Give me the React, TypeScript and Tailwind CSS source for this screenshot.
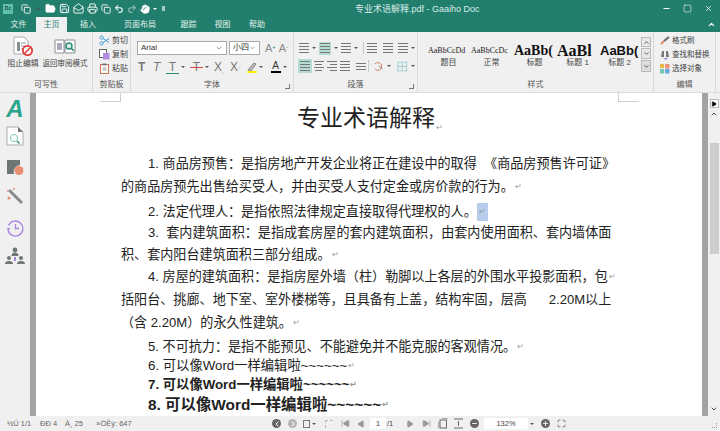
import {
  Copy, FolderOpen, Save, MailOpen, Printer, Undo2, Redo2, Hand, ChevronDown, ChevronUp, Minus, Square, X,
  ChevronLeft, ChevronRight, Plus, Maximize, Play, SkipBack, SkipForward,
} from 'lucide-react';

const font = { cjk: "font-['Liberation_Sans','Noto_Sans_CJK_SC',sans-serif]" };

const tabs = ['文件', '主页', '插入', '页面布局', '跟踪', '视图', '帮助'];

function Caret() {
  return <span className="mx-[2px] h-0 w-0 border-x-[2px] border-t-[2px] border-x-transparent border-t-[#555]" />;
}

function Group({ w, label, corner, children }: { w: string; label: string; corner?: boolean; children: React.ReactNode }) {
  return (
    <div className={`${w} relative flex shrink-0 flex-col border-r border-[#d9d9d9]`}>
      <div className="relative h-[46px]">{children}</div>
      <div className="text-center text-[8px] leading-[14px] text-[#555]">{label}</div>
      {corner && <span className="absolute bottom-[3px] right-[3px] h-[5px] w-[5px] border-b border-r border-[#777]" />}
    </div>
  );
}

function Lines({ n = 4, align = 'stretch' }: { n?: number; align?: 'stretch' | 'center' | 'right' }) {
  return (
    <span className={`flex h-[12px] w-[11px] flex-col justify-center gap-[2px] ${align === 'center' ? 'items-center' : align === 'right' ? 'items-end' : 'items-stretch'}`}>
      {Array.from({ length: n }).map((_, i) => (
        <span key={i} className={`block h-px bg-[#777] ${i % 2 && align !== 'stretch' ? 'w-[7px]' : 'w-[10px]'}`} />
      ))}
    </span>
  );
}

function StyleCard({ w, sample, cls, label }: { w: string; sample: string; cls: string; label: string }) {
  return (
    <div className={`${w} flex shrink-0 flex-col items-center pt-[8px]`}>
      <div className={`flex h-[13px] w-full items-center whitespace-nowrap pl-[1px] ${cls}`}>{sample}</div>
      <div className="text-[8px] leading-[12px] text-[#444]">{label}</div>
    </div>
  );
}

function Ribbon() {
  return (
    <div className={`flex h-[61px] items-stretch border-b border-[#dcdcdc] bg-[#f0f0f0] ${font.cjk}`}>
      <Group w="w-[93px]" label="可写性">
        <div className="flex pl-[7px] pt-[3px]">
          <div className="flex w-[32px] flex-col items-center">
            <svg width="22" height="22" viewBox="0 0 22 22">
              <path d="M2 2h10l4 4v13H2z" fill="#fff" stroke="#aaa" />
              <rect x="5" y="7" width="3" height="9" fill="#8a8f8f" />
              <path d="M9 8h5M9 11h4M9 14h3" stroke="#9a9a9a" />
              <circle cx="15.5" cy="15.5" r="4.6" fill="#fff" stroke="#e23a3a" strokeWidth="1.8" />
              <path d="M12.5 18.5l6-6" stroke="#e23a3a" strokeWidth="1.6" />
            </svg>
            <span className="whitespace-nowrap text-[7.8px] leading-[13px] text-[#444]">阻止编辑</span>
          </div>
          <div className="ml-[3px] flex w-[46px] flex-col items-center">
            <svg width="22" height="22" viewBox="0 0 22 22">
              <path d="M1 5h9v13H1zM11 5h10v13H11z" fill="#fff" stroke="#8a8f8f" />
              <rect x="3" y="8" width="5" height="7" fill="#aab" />
              <circle cx="15" cy="11" r="3" fill="#d5efe8" stroke="#2b8a78" strokeWidth="1.4" />
              <path d="M17 13l3 3" stroke="#2b8a78" strokeWidth="1.6" />
            </svg>
            <span className="whitespace-nowrap text-[7.5px] leading-[13px] text-[#444]">返回审阅模式</span>
          </div>
        </div>
      </Group>
      <Group w="w-[38px]" label="剪贴板">
        <div className="flex flex-col gap-[1px] pl-[6px] pt-[2px] text-[8px] leading-[13px] text-[#444]">
          <div className="flex items-center gap-[2px]">
            <svg width="11" height="11" viewBox="0 0 11 11" fill="none" stroke="#3a9bd5"><circle cx="2.5" cy="2.5" r="1.6" /><circle cx="2.5" cy="8.5" r="1.6" /><path d="M4 3.5l6 4M4 7.5l6-4" /></svg>
            <span>剪切</span>
          </div>
          <div className="flex items-center gap-[2px]">
            <svg width="11" height="11" viewBox="0 0 11 11"><rect x="0.5" y="0.5" width="7" height="8" fill="#fff" stroke="#666" /><rect x="4" y="4" width="6.5" height="6.5" fill="#b18be0" /></svg>
            <span>复制</span>
          </div>
          <div className="flex items-center gap-[2px]">
            <svg width="11" height="11" viewBox="0 0 11 11"><rect x="1.5" y="1.5" width="8" height="9" fill="#fff" stroke="#c8734f" /><rect x="3.5" y="0.5" width="4" height="2" fill="#777" /><path d="M3.5 5h4M3.5 7h4" stroke="#999" /></svg>
            <span>粘贴</span>
          </div>
        </div>
      </Group>
      <Group w="w-[163px]" label="字体" corner>
        <div className="flex items-center gap-[2px] pl-[6px] pt-[9px]">
          <div className="flex h-[14px] w-[90px] shrink-0 items-center justify-between border border-[#a9a9a9] bg-white px-[3px] font-['Liberation_Sans'] text-[8px] text-[#333]">
            Arial <ChevronDown size={8} strokeWidth={1.5} />
          </div>
          <div className="flex h-[14px] w-[31px] shrink-0 items-center justify-between whitespace-nowrap border border-[#a9a9a9] bg-white px-[3px] text-[8px] text-[#333]">
            小四 <ChevronDown size={8} strokeWidth={1.5} />
          </div>
          <span className="ml-[3px] font-['Liberation_Sans'] text-[11px] leading-none text-[#888]">A<sup className="text-[6px] text-[#2b8a78]">+</sup></span>
          <span className="ml-[1px] font-['Liberation_Sans'] text-[11px] leading-none text-[#888]">A<sup className="text-[6px] text-[#2b8a78]">-</sup></span>
        </div>
        <div className="mt-[5px] flex h-[14px] items-center pl-[7px] font-['Liberation_Sans'] text-[12px] leading-none text-[#777]">
          <span className="w-[15px] font-bold">T</span>
          <span className="w-[13px] italic">T</span>
          <span className="w-[13px] border-b border-[#2b8a78] text-center leading-[12px]">T</span>
          <Caret />
          <span className="relative ml-[3px] w-[13px] text-center">T<span className="absolute left-0 top-[6px] h-px w-[13px] bg-[#d44]" /></span>
          <Caret />
          <span className="ml-[3px] w-[13px]">X<sub className="text-[6px] text-[#2b8a78]">,</sub></span>
          <span className="ml-[3px] w-[16px]">X<sup className="text-[6px] text-[#2b8a78]">,</sup></span>
          <span className="flex w-[11px] flex-col items-center">
            <svg width="11" height="10" viewBox="0 0 11 10" fill="none" stroke="#888"><path d="M2 9l6-7 2 1-5 7z" fill="#bbb" /></svg>
            <span className="h-[2px] w-[10px] bg-[#ffef00]" />
          </span>
          <Caret />
          <span className="ml-[5px] flex w-[11px] flex-col items-center text-[10px] leading-[10px] text-[#333]">
            A<span className="h-[2px] w-[10px] bg-black" />
          </span>
          <Caret />
        </div>
      </Group>
      <Group w="w-[124px]" label="段落" corner>
        <div className="flex h-[23px] items-center gap-[1px] pl-[5px] pt-[9px]">
          <Lines />
          <Caret />
          <span className="flex h-[13px] w-[14px] items-center justify-center bg-[#b5dcd2]"><Lines /></span>
          <Caret />
          <Lines />
          <Caret />
          <span className="mx-[2px] h-[12px] w-px bg-[#ccc]" />
          <Lines />
          <span className="w-[5px]" />
          <Lines />
          <span className="w-[3px]" />
          <Lines />
          <Caret />
        </div>
        <div className="mt-[4px] flex h-[14px] items-center gap-[1px] pl-[4px]">
          <span className="flex h-[14px] w-[15px] items-center justify-center bg-[#b5dcd2]"><Lines /></span>
          <Lines align="center" />
          <span className="w-[1px]" />
          <Lines align="right" />
          <span className="w-[1px]" />
          <Lines />
          <span className="w-[3px]" />
          <Lines n={3} />
          <span className="mx-[1px] h-[12px] w-px bg-[#ccc]" />
          <svg className="ml-[2px]" width="12" height="12" viewBox="0 0 12 12" fill="none" stroke="#d0785a"><path d="M2 4a4 4 0 1 1 0 5" /><path d="M6 6l4 3" stroke="#888" /></svg>
          <Caret />
          <svg className="ml-[3px]" width="11" height="11" viewBox="0 0 12 12" fill="none" stroke="#9cc"><rect x="1" y="1" width="10" height="10" /><path d="M6 1v10M1 6h10" /></svg>
          <Caret />
        </div>
      </Group>
      <Group w="w-[236px]" label="样式">
        <div className="flex items-start pl-[9px] pt-[4px]">
          <StyleCard w="w-[43px]" sample="AaBbCcDd" cls="font-['Liberation_Serif'] text-[8px] text-[#222]" label="题目" />
          <StyleCard w="w-[43px]" sample="AaBbCcDc" cls="font-['Liberation_Serif'] text-[8px] text-[#222]" label="正常" />
          <StyleCard w="w-[43px]" sample="AaBb(" cls="font-['Liberation_Serif'] text-[14px] font-bold text-[#111]" label="标题" />
          <StyleCard w="w-[43px]" sample="AaBl" cls="font-['Liberation_Serif'] text-[16px] font-bold text-[#111]" label="标题 1" />
          <StyleCard w="w-[41px]" sample="AaBb(" cls="font-['Liberation_Sans'] text-[13px] font-bold text-[#111]" label="标题 2" />
          <div className="ml-[1px] flex flex-col gap-px pt-[1px]">
            <span className="flex h-[10px] w-[10px] items-center justify-center border border-[#bbb] bg-[#e8e8e8]"><ChevronUp size={7} /></span>
            <span className="flex h-[11px] w-[10px] items-center justify-center border border-[#bbb] bg-[#e8e8e8]"><ChevronDown size={7} /></span>
            <span className="flex h-[12px] w-[10px] items-center justify-center border border-[#bbb] bg-[#ddd]"><ChevronDown size={7} /></span>
          </div>
        </div>
      </Group>
      <Group w="w-[62px]" label="编辑">
        <div className="flex flex-col gap-px pl-[6px] pt-[2px] text-[7.5px] leading-[13px] text-[#444]">
          <div className="flex items-center gap-[2px] whitespace-nowrap">
            <svg width="10" height="10" viewBox="0 0 10 10" fill="none"><path d="M1 8l3-3" stroke="#e08a60" strokeWidth="2" /><path d="M4 5l5-4" stroke="#666" strokeWidth="2" /></svg>格式刷
          </div>
          <div className="flex items-center gap-[2px] whitespace-nowrap">
            <svg width="10" height="10" viewBox="0 0 10 10"><path d="M2 1h2v6H1zM6 1h2l1 6H6z" fill="#777" /><path d="M3 8h5l-2 2z" fill="#a88be0" /></svg>查找和替换
          </div>
          <div className="flex items-center gap-[2px] whitespace-nowrap">
            <svg width="10" height="10" viewBox="0 0 10 10"><rect x="0" y="0" width="4" height="4" fill="#e5b84c" /><rect x="5" y="0" width="4.5" height="4.5" fill="#e9917a" /><rect x="0" y="5" width="4" height="4.5" fill="#72c7b4" /><rect x="5" y="5" width="4.5" height="4.5" fill="#6aa8e0" /></svg>选择对象
          </div>
        </div>
      </Group>
    </div>
  );
}

function Header() {
  return (
    <div className={`relative h-[32px] bg-[#237f6d] text-white ${font.cjk}`}>
      <div className="flex h-[17px] items-center pl-[3px]">
        <span className="flex h-[10px] w-[10px] items-center justify-center bg-[#5fc2a8] font-['Liberation_Sans'] text-[5px] font-bold text-[#12483e]">Dc</span>
        <div className="ml-[8px] flex items-center gap-[3px]">
          <Copy size={10} strokeWidth={2} />
          <Caret />
          <FolderOpen size={11} fill="#fff" strokeWidth={1.5} />
          <Save size={11} strokeWidth={2} />
          <MailOpen size={11} strokeWidth={2} />
          <Printer size={11} strokeWidth={2} />
          <Copy size={10} strokeWidth={2} />
          <Undo2 size={10} strokeWidth={2.5} />
          <Redo2 size={10} strokeWidth={2.5} className="opacity-50" />
          <Hand size={10} fill="#fff" />
          <span className="h-0 w-0 border-x-[2px] border-t-[2px] border-x-transparent border-t-white" />
          <span className="ml-[2px] h-[5px] w-[3px] bg-white/60" />
        </div>
      </div>
      <div className="absolute left-[355px] top-[3px] whitespace-nowrap text-[9px] leading-[12px] text-[#d7ece6]">专业术语解释.pdf - Gaaiho Doc</div>
      <div className="absolute right-[7px] top-[4px] flex items-center gap-[12px]">
        <Minus size={9} strokeWidth={2.5} />
        <Square size={9} strokeWidth={1.5} />
        <X size={9} strokeWidth={2} />
      </div>
      <ChevronUp size={9} strokeWidth={3} className="absolute right-[4px] top-[20px]" />
      <div className="flex h-[15px] items-end">
        {tabs.map((t, i) => (
          <span
            key={t}
            className={`flex h-[15px] items-center justify-center whitespace-nowrap text-[8px] ${i === 1 ? 'bg-[#f0f0f0] text-[#237f6d]' : 'text-[#e4f2ee]'} ${['w-[37px]', 'w-[31px]', 'w-[42px]', 'w-[62px]', 'w-[35px]', 'w-[33px]', 'w-[36px]'][i]} ${i === 0 ? '-mr-[1px]' : ''}`}
          >
            {t}
          </span>
        ))}
      </div>
    </div>
  );
}

function Rail() {
  return (
    <div className="flex w-[30px] shrink-0 flex-col items-center bg-[#f0f0f0] pt-[4px]">
      <span className="h-[24px] font-['Liberation_Sans'] text-[24px] font-bold italic leading-[24px] text-[#2ca58d]">A</span>
      <svg className="mt-[5px]" width="18" height="20" viewBox="0 0 18 20" fill="none">
        <path d="M1 1h11l5 5v13H1z" fill="#fff" stroke="#a8adad" />
        <path d="M12 1v5h5z" fill="#777" />
        <circle cx="8" cy="12" r="3.6" stroke="#7dcbb9" />
        <path d="M11 15l2.5 2.5" stroke="#2b8a78" strokeWidth="1.5" />
      </svg>
      <svg className="mt-[13px]" width="18" height="17" viewBox="0 0 18 17">
        <path d="M1 1h13v5a7 7 0 0 0-6 9H1z" fill="#6f7676" />
        <circle cx="13" cy="11.5" r="4.5" fill="#e98d72" />
      </svg>
      <svg className="mt-[11px]" width="18" height="18" viewBox="0 0 18 18" fill="none">
        <path d="M3 3l13 13" stroke="#858b8b" strokeWidth="3" />
        <circle cx="3" cy="11" r="1.6" fill="#e98d72" />
        <circle cx="8" cy="2" r="1" fill="#e98d72" />
        <circle cx="1.5" cy="4" r="0.8" fill="#e98d72" />
      </svg>
      <svg className="mt-[14px]" width="18" height="18" viewBox="0 0 18 18" fill="none" stroke="#a985e0" strokeWidth="1.3">
        <path d="M2.5 6.5A7.5 7.5 0 1 1 2 11" />
        <path d="M9.5 5v4.5h3.5" />
        <path d="M0.5 9l2 2.5 2-2.5z" fill="#a985e0" stroke="none" />
      </svg>
      <svg className="mt-[10px]" width="20" height="18" viewBox="0 0 20 18" fill="#6f7676">
        <circle cx="10" cy="3" r="2.4" />
        <path d="M6.5 9a3.5 3.5 0 0 1 7 0z" />
        <circle cx="4" cy="11" r="2" />
        <path d="M0 17a4 3 0 0 1 8 0z" />
        <circle cx="16" cy="11" r="2" />
        <path d="M12 17a4 3 0 0 1 8 0z" />
        <path d="M10 10v4" stroke="#a985e0" strokeWidth="2" />
      </svg>
    </div>
  );
}

const Mark = () => <span className="ml-[1px] text-[8px] leading-[18px] text-[#9a9a9a]">↵</span>;

const body: { h: string; x: string; text: string; cls?: string; sel?: boolean; noMark?: boolean }[] = [
  { h: 'h-[23px]', x: 'pl-[27px]', text: '1. 商品房预售：是指房地产开发企业将正在建设中的取得  《商品房预售许可证》', noMark: true },
  { h: 'h-[25px]', x: 'pl-0', text: '的商品房预先出售给买受人，并由买受人支付定金或房价款的行为。' },
  { h: 'h-[21px]', x: 'pl-[27px]', text: '2. 法定代理人：是指依照法律规定直接取得代理权的人。', sel: true },
  { h: 'h-[22px]', x: 'pl-[27px]', text: '3.  套内建筑面积：是指成套房屋的套内建筑面积，由套内使用面积、套内墙体面', noMark: true },
  { h: 'h-[22px]', x: 'pl-0', text: '积、套内阳台建筑面积三部分组成。' },
  { h: 'h-[23px]', x: 'pl-[27px]', text: '4. 房屋的建筑面积：是指房屋外墙（柱）勒脚以上各层的外围水平投影面积，包' },
  { h: 'h-[23px]', x: 'pl-0', text: '括阳台、挑廊、地下室、室外楼梯等，且具备有上盖，结构牢固，层高      2.20M以上', noMark: true },
  { h: 'h-[24px]', x: 'pl-0', text: '（含 2.20M）的永久性建筑。' },
  { h: 'h-[19px]', x: 'pl-[27px]', text: '5. 不可抗力：是指不能预见、不能避免并不能克服的客观情况。' },
  { h: 'h-[19px]', x: 'pl-[27px]', text: '6. 可以像Word一样编辑啦~~~~~~', cls: 'text-[13.3px]' },
  { h: 'h-[20px]', x: 'pl-[27px]', text: '7. 可以像Word一样编辑啦~~~~~~', cls: 'text-[13.3px] font-bold' },
  { h: 'h-[22px]', x: 'pl-[27px]', text: '8. 可以像Word一样编辑啦~~~~~~', cls: 'font-bold text-[15.4px]' },
];

function Page() {
  return (
    <div className="relative min-w-0 flex-1 overflow-hidden bg-white pl-[85px] pt-[12px]">
      <span className="absolute left-[64px] top-0 h-[9px] w-[21px] border-b border-r border-[#cfcfcf]" />
      <span className="absolute left-[582px] top-0 h-[9px] w-[21px] border-b border-l border-[#cfcfcf]" />
      <div className={`flex h-[50px] items-start justify-center pr-[83px] text-[23px] leading-[26px] text-[#222] ${font.cjk}`}>
        专业术语解释<span className="mt-[4px]"><Mark /></span>
      </div>
      <div className={`flex flex-col text-[13.1px] text-[#222] ${font.cjk}`}>
        {body.map((l, i) => (
          <div key={i} className={`flex items-start whitespace-pre leading-[18px] ${l.h} ${l.x} ${l.cls ?? ''}`}>
            {l.text}
            {l.sel ? (
              <span className="flex h-[18px] w-[11px] items-center justify-center bg-[#b7cdeb]"><Mark /></span>
            ) : (
              !l.noMark && <Mark />
            )}
          </div>
        ))}
      </div>
    </div>
  );
}

function Scrollbar() {
  return (
    <div className="relative flex w-[12px] shrink-0 flex-col items-center bg-[#f0f0f0]">
      <span className="mt-[6px] flex h-[9px] w-[9px] items-center justify-center border border-[#bbb] bg-white"><Play size={6} fill="#111" /></span>
      <ChevronUp size={8} strokeWidth={2} className="mt-[2px]" />
      <div className="mt-[25px] h-[111px] w-[9px] bg-[#cdcdcd]" />
      <ChevronDown size={8} strokeWidth={2} className="absolute bottom-[3px]" />
    </div>
  );
}

function Round({ dim, children }: { dim?: boolean; children: React.ReactNode }) {
  return <span className={`flex h-[9px] w-[9px] items-center justify-center rounded-full ${dim ? 'bg-[#b5b5b5]' : 'bg-[#666]'} text-white`}>{children}</span>;
}

function StatusBar() {
  return (
    <div className="relative flex h-[15px] items-center bg-[#f0f0f0] font-['Liberation_Sans'] text-[7.5px] text-[#666]">
      <span className="ml-[7px] w-[33px]">½Ú 1/1</span>
      <span className="w-[25px]">ÐÐ 4</span>
      <span className="w-[31px]">À¸ 25</span>
      <span className="w-[176px]">×ÖÊý: 647</span>
      <div className="flex items-center">
        <Round><ChevronLeft size={8} strokeWidth={3} /></Round>
        <span className="ml-[7px]"><Round dim><ChevronRight size={8} strokeWidth={3} /></Round></span>
        <span className="ml-[6px] h-[8px] w-[7px] border border-[#777]" />
        <Caret />
        <span className="ml-[7px] h-[8px] w-[8px] border-l border-t border-dashed border-[#bbb]" />
        <SkipBack size={9} className="ml-[8px] text-[#999]" fill="#999" />
        <Play size={8} className="ml-[7px] rotate-180 text-[#999]" fill="#999" />
        <span className="ml-[5px] flex h-[11px] w-[16px] items-center justify-center bg-white text-[#444]">1</span>
        <span className="ml-[1px] w-[10px] text-[#444]">/1</span>
        <Play size={8} className="ml-[9px] text-[#999]" fill="#999" />
        <SkipForward size={9} className="ml-[8px] text-[#999]" fill="#999" />
        <svg className="ml-[7px]" width="10" height="11" viewBox="0 0 10 11" fill="none" stroke="#666"><rect x="2" y="2" width="6.5" height="8" /><path d="M0 4v6M4 0h6" /></svg>
        <svg className="ml-[6px]" width="9" height="11" viewBox="0 0 9 11" fill="none" stroke="#666"><path d="M0 1h9M0 10h9M4.5 3v5" /></svg>
        <span className="ml-[7px]"><Round><Minus size={7} strokeWidth={3} /></Round></span>
        <span className="ml-[5px] flex h-[11px] w-[44px] items-center justify-center bg-white text-[#444]">132%</span>
        <Caret />
        <span className="ml-[5px]"><Round><Plus size={7} strokeWidth={3} /></Round></span>
        <Maximize size={9} strokeWidth={2} className="ml-[7px] text-[#555]" />
      </div>
      <span className="absolute bottom-[3px] right-[3px] h-[5px] w-[5px] border-b border-r border-dotted border-[#999]" />
    </div>
  );
}

export default function App() {
  return (
    <div className="flex h-[431px] w-[720px] flex-col overflow-hidden bg-[#f0f0f0]">
      <Header />
      <Ribbon />
      <div className="flex h-[323px] min-h-0">
        <Rail />
        <div className="w-[6px] shrink-0 bg-[#a0a5a4]" />
        <Page />
        <div className="w-[6px] shrink-0 bg-[#a0a5a4]" />
        <Scrollbar />
      </div>
      <StatusBar />
    </div>
  );
}
